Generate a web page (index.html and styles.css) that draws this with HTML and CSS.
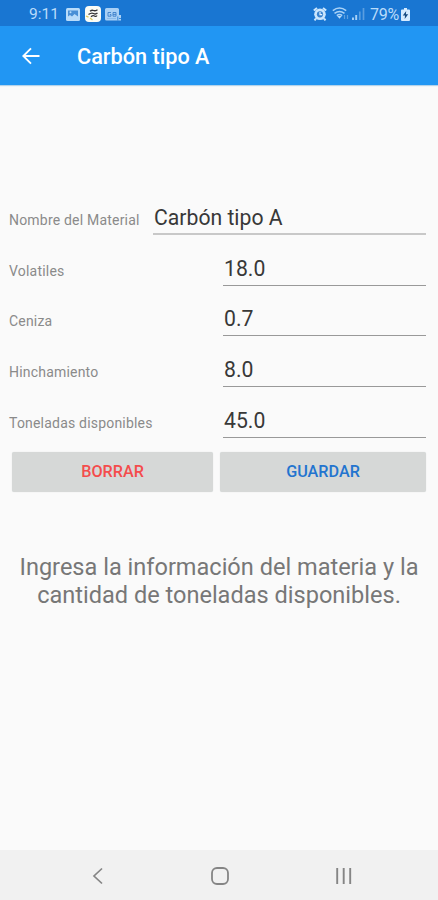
FILE: index.html
```html
<!DOCTYPE html>
<html lang="es">
<head>
<meta charset="utf-8">
<title>Carbón tipo A</title>
<link rel="stylesheet" href="styles.css">
</head>
<body>
<div class="status">
  <span class="clock">9:11</span>
  <svg class="i-photo" width="14" height="13" viewBox="0 0 14 13"><rect width="14" height="13" rx="1.5" fill="#b9dcfa"/><path d="M2 2.500h10v6l-3.500-2.500-2.500 2.500-2-1.500L2 8.500z" fill="#4a90d6"/><circle cx="4.500" cy="4.300" r="1" fill="#b9dcfa"/></svg>
  <svg class="i-app" width="16" height="16" viewBox="0 0 16 16"><rect width="16" height="16" rx="4" fill="#fafcf6"/><path d="M5 5.200Q7 3.700 8.500 4.500T12.500 3.700M3.500 8.500Q6.500 6.300 8.500 7.500T12.500 7M6 10.700Q8 9 9.500 10T12 9.500" fill="none" stroke="#333" stroke-width="1.300"/><path d="M1 10l2.500 1.200M5 12l2.500 2" stroke="#dfc95a" stroke-width="1.300"/></svg>
  <svg class="i-news" width="17" height="13" viewBox="0 0 17 13"><path d="M1.500 0h11q1.500 0 1.500 1.500V7h2v5.500H1.500Q0 12.500 0 11V1.500Q0 0 1.500 0z" fill="#a9d0f5"/><path d="M6 4.500H3v3.700h3V6.500H4.800M8 4.500h3v3.700H8zM8 6.400h3" fill="none" stroke="#3c7fca" stroke-width=".9"/><path d="M2 10.500h9" stroke="#8bbbe9"/><path d="M12.800 8.500v4M14 10.500h2" stroke="#1976d2" stroke-width=".8"/></svg>
  <span class="gap"></span>
  <svg class="i-alarm" width="14" height="14" viewBox="0 0 14 14"><path d="M.8 3.500L4 1M13.200 3.500L10 1M3 11.500l-1.500 1.800M11 11.500l1.500 1.800" stroke="#cbe6fd" stroke-width="2"/><circle cx="7" cy="7.300" r="5.800" fill="#cbe6fd"/><circle cx="7" cy="7.300" r="3.100" fill="#3a83cf"/><path d="M7 5v2.600h2.200" fill="none" stroke="#e4f3ff" stroke-width="1.200"/></svg>
  <svg class="i-wifi" width="18" height="14" viewBox="0 0 18 14"><g fill="none" stroke="#a9d2f7" stroke-width="1.500"><path d="M.8 3.700Q7.500-1.500 14.200 3.700M2.500 6.300Q7.500 2.500 12.500 6.300M4.800 8.700Q7.500 6.500 10.200 8.700"/></g><path d="M5.200 9h4.600L7.500 11.800z" fill="#b9dcfa"/><path d="M12.500 8v4M15.500 8v4" stroke="#5e9fdd" stroke-width="1.200"/></svg>
  <svg class="i-signal" width="13" height="13" viewBox="0 0 13 13"><path d="M1 9.500V12M4.200 7v5" stroke="#a9d2f7" stroke-width="1.900"/><path d="M7.800 3.500V12M11.500 0v12" stroke="#5a9ee0" stroke-width="1.700"/></svg>
  <span class="pct">79%</span>
  <svg class="i-batt" width="9" height="13" viewBox="0 0 9 13"><path d="M3 0h3v1.500h2q1 0 1 1V12q0 1-1 1H1q-1 0-1-1V2.500q0-1 1-1h2z" fill="#d5ebff"/><path d="M5.200 3L1.800 7.500h2.200L3.700 11l3.500-4.800H4.900z" fill="#164a80"/></svg>
</div>
<header class="bar">
  <svg width="18" height="18" viewBox="0 0 18 18"><path d="M17.500 9H1.500M9 1.300L1.300 9L9 16.700" fill="none" stroke="#fff" stroke-width="1.900"/></svg>
  <h1>Carbón tipo A</h1>
</header>
<main>
  <form class="form">
    <div class="row name"><label>Nombre del Material</label><div class="field">Carbón tipo A</div></div>
    <div class="row"><label>Volatiles</label><div class="field">18.0</div></div>
    <div class="row"><label>Ceniza</label><div class="field">0.7</div></div>
    <div class="row"><label>Hinchamiento</label><div class="field">8.0</div></div>
    <div class="row"><label>Toneladas disponibles</label><div class="field">45.0</div></div>
    <div class="actions"><button type="button" class="del">BORRAR</button><button type="button" class="save">GUARDAR</button></div>
  </form>
  <p class="hint">Ingresa la información del materia y la<br>cantidad de toneladas disponibles.</p>
</main>
<nav class="nav">
  <svg width="12" height="18" viewBox="0 0 12 18"><path d="M10 1.500L2 9l8 7.500" fill="none" stroke="#858585" stroke-width="1.700"/></svg>
  <svg width="18" height="18" viewBox="0 0 18 18"><rect x="1" y="1" width="16" height="16" rx="5" fill="none" stroke="#858585" stroke-width="1.800"/></svg>
  <svg width="16" height="16" viewBox="0 0 16 16"><path d="M1.200 0v16M7.700 0v16M14.200 0v16" stroke="#858585" stroke-width="1.900"/></svg>
</nav>
</body>
</html>
```
FILE: styles.css
```css
* { box-sizing: border-box; }
body {
  margin: 0;
  width: 438px;
  height: 900px;
  display: flex;
  flex-direction: column;
  background: #fafafa;
  font-family: Roboto, sans-serif;
  overflow: hidden;
}
svg { display: block; flex: none; }
.status {
  height: 26px;
  padding: 2px 28px 0 29px;
  display: flex;
  align-items: center;
  background: #1976d2;
  color: #b9dcfa;
  font-size: 15.5px;
}
.clock { width: 37px; }
.i-app { margin-left: 5px; }
.i-news { margin-left: 4px; }
.gap { flex: 1; }
.i-wifi { margin-left: 5px; }
.i-signal { margin-left: 2px; }
.pct { margin-left: 5px; width: 30px; font-size: 16px; letter-spacing: -0.3px; }
.i-batt { margin-left: 1px; }
.bar {
  height: 59px;
  padding-left: 22px;
  display: flex;
  align-items: center;
  gap: 37px;
  background: #2196f3;
  box-shadow: 0 1px 1px #b4d3ea;
  color: #fff;
}
.bar h1 { margin: 2px 0 0; font-size: 21.7px; font-weight: 500; line-height: 26px; }
main { flex: 1; padding: 111px 12px 0 9px; }
.row {
  height: 50.7px;
  display: grid;
  grid-template-columns: 214px 1fr;
}
.row.name { height: 39.5px; grid-template-columns: 144px 1fr; }
.row + .row { padding-top: 11.2px; }
label {
  padding-top: 16px;
  font-size: 14px;
  line-height: 17px;
  letter-spacing: 0.2px;
  color: #8a8a8a;
  white-space: nowrap;
}
.row + .row label { padding-top: 16px; }
.field {
  height: 39px;
  padding: 9px 0 0 1px;
  border-bottom: 1px solid #999;
  font-size: 21.2px;
  line-height: 26px;
  color: #383838;
}
.name .field { border-bottom: 2px solid #c8c8c8; }
.actions {
  display: grid;
  grid-template-columns: 201px 206px;
  gap: 7px;
  padding: 14px 0 0 3px;
  margin-right: -3px;
}
button {
  height: 40px;
  padding: 0;
  border: 0;
  border-radius: 2px;
  background: #d6d8d7;
  box-shadow: 0 0 1px #d6d8d7;
  font: 500 16.2px/40px Roboto, sans-serif;
}
.del { color: #f44c4c; }
.save { color: #2374cf; }
.hint { margin: 61px -3px 0 0; text-align: center; font-size: 23.55px; line-height: 28px; color: #777; }
.nav {
  height: 50px;
  padding: 2px 86px 0 92px;
  display: flex;
  align-items: center;
  justify-content: space-between;
  background: #f1f1f1;
}
```
